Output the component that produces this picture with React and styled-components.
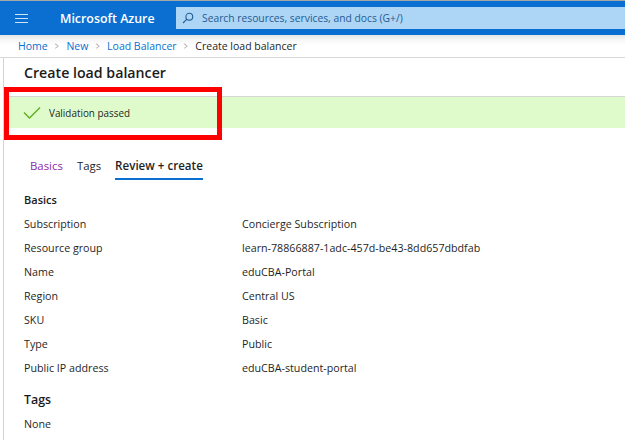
import React from "react";
import styled, { createGlobalStyle } from "styled-components";

const Global = createGlobalStyle`
  html, body { margin: 0; padding: 0; background: #ffffff; }
  body { font-family: "Open Sans", "Noto Sans", sans-serif; color: #1f1f1f; overflow: hidden; }
  * { box-sizing: border-box; }
`;

const Page = styled.div`
  width: 625px;
  height: 440px;
  display: flex;
  flex-direction: column;
  position: relative;
  overflow: hidden;
`;

const TopBar = styled.header`
  height: 35px;
  border-top: 1px solid #a7a7a7;
  background: #0a6fd1;
  display: flex;
  align-items: center;
  flex-shrink: 0;
`;

const Burger = styled.div`
  width: 13px;
  margin-left: 15px;
  display: flex;
  flex-direction: column;
  gap: 3px;
  span {
    display: block;
    height: 1px;
    background: #cfe4f7;
  }
`;

const Brand = styled.div`
  margin-left: 32px;
  color: #ffffff;
  font-weight: 600;
  font-size: 12.4px;
  width: 116px;
`;

const Search = styled.div`
  flex: 1;
  height: 22px;
  background: #add5f6;
  display: flex;
  align-items: center;
  padding-left: 6px;
  gap: 8px;
  color: #245c93;
  font-size: 10.3px;
`;

const Crumbs = styled.nav`
  height: 23px;
  flex-shrink: 0;
  background: linear-gradient(#e4e4e4 0px, #f7f7f7 5px, #ffffff 10px);
  border-bottom: 1px solid #d8d8d8;
  display: flex;
  align-items: center;
  padding-left: 18px;
  gap: 5px;
  font-size: 10.5px;
`;

const Crumb = styled.span`
  color: ${(p) => (p.$current ? "#1f1f1f" : "#0a6fd1")};
`;

const Chevron = styled.span`
  color: #9a9a9a;
  font-size: 10px;
  transform: scaleX(0.7);
  display: inline-block;
  margin: 0 1.5px;
`;

const Panel = styled.main`
  flex: 1;
  margin-left: 3px;
  border-left: 1px solid #d4d4d4;
  display: flex;
  flex-direction: column;
`;

const Title = styled.h1`
  margin: 0;
  height: 38px;
  padding: 0 0 10px 20px;
  display: flex;
  align-items: center;
  font-size: 14.2px;
  font-weight: 600;
  color: #1b1b1b;
`;

const Banner = styled.div`
  height: 32px;
  border-top: 1px solid #d6d6d6;
  background: #dffbcc;
  display: flex;
  align-items: center;
  padding: 1px 0 0 19px;
  gap: 8px;
  font-size: 9.9px;
  color: #1f1f1f;
`;

const Annotation = styled.div`
  position: absolute;
  left: 4px;
  top: 87px;
  width: 218px;
  height: 53px;
  border: 5px solid #ff0000;
  pointer-events: none;
`;

const Tabs = styled.div`
  display: flex;
  gap: 14px;
  margin: 30px 0 0 26px;
`;

const Tab = styled.div`
  line-height: 16px;
  padding-bottom: 4px;
  font-size: ${(p) => (p.$active ? "11.6px" : "11.4px")};
  font-weight: ${(p) => (p.$active ? 600 : 400)};
  color: ${(p) => (p.$visited ? "#8b2bab" : "#1f1f1f")};
  border-bottom: 2px solid ${(p) => (p.$active ? "#0a6fd1" : "transparent")};
`;

const SectionHead = styled.h2`
  margin: ${(p) => p.$gap}px 0 0 20px;
  height: 24px;
  line-height: 24px;
  font-size: ${(p) => p.$size}px;
  font-weight: 600;
  color: #1b1b1b;
`;

const Row = styled.div`
  display: grid;
  grid-template-columns: 218px 1fr;
  height: 24px;
  align-items: center;
  padding-left: 20px;
  font-size: 10.7px;
  color: #1f1f1f;
`;

const rows = [
  ["Subscription", "Concierge Subscription"],
  ["Resource group", "learn-78866887-1adc-457d-be43-8dd657dbdfab"],
  ["Name", "eduCBA-Portal"],
  ["Region", "Central US"],
  ["SKU", "Basic"],
  ["Type", "Public"],
  ["Public IP address", "eduCBA-student-portal"],
];

export default function App() {
  return (
    <Page>
      <Global />
      <TopBar>
        <Burger>
          <span />
          <span />
          <span />
        </Burger>
        <Brand>Microsoft Azure</Brand>
        <Search>
          <svg width="12" height="12" viewBox="0 0 12 12" fill="none" stroke="#245c93" strokeWidth="1.1">
            <circle cx="7.3" cy="4.7" r="3.4" />
            <path d="M4.9 7.1 L1 11" />
          </svg>
          <span>Search resources, services, and docs (G+/)</span>
        </Search>
      </TopBar>
      <Crumbs>
        <Crumb>Home</Crumb>
        <Chevron>&gt;</Chevron>
        <Crumb>New</Crumb>
        <Chevron>&gt;</Chevron>
        <Crumb>Load Balancer</Crumb>
        <Chevron>&gt;</Chevron>
        <Crumb $current>Create load balancer</Crumb>
      </Crumbs>
      <Panel>
        <Title>Create load balancer</Title>
        <Banner>
          <svg width="18" height="14" viewBox="0 0 18 14" fill="none" stroke="#5cae1e" strokeWidth="1.3">
            <path d="M1 6.5 L6.5 12 L17 1.5" />
          </svg>
          <span>Validation passed</span>
        </Banner>
        <Tabs>
          <Tab $visited>Basics</Tab>
          <Tab>Tags</Tab>
          <Tab $active>Review + create</Tab>
        </Tabs>
        <SectionHead $gap={8} $size={11}>Basics</SectionHead>
        {rows.map(([k, v]) => (
          <Row key={k}>
            <span>{k}</span>
            <span>{v}</span>
          </Row>
        ))}
        <SectionHead $gap={8} $size={12.4}>Tags</SectionHead>
        <Row>
          <span>None</span>
        </Row>
      </Panel>
      <Annotation />
    </Page>
  );
}
